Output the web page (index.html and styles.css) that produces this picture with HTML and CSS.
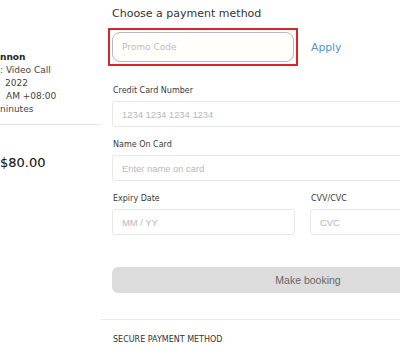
FILE: index.html
```html
<!DOCTYPE html>
<html>
<head>
<meta charset="utf-8">
<link rel="stylesheet" href="styles.css">
</head>
<body>
<div class="page">
  <aside class="summary">
    <div class="details">
      <div class="line strong">nnon</div>
      <div class="line">: Video Call</div>
      <div class="line ind">2022</div>
      <div class="line ind2">AM +08:00</div>
      <div class="line">ninutes</div>
    </div>
    <div class="total">$80.00</div>
  </aside>
  <main class="payment">
    <div class="inner">
      <h2 class="title">Choose a payment method</h2>
      <div class="promo-row">
        <div class="promo-wrap">
          <input class="promo" type="text" placeholder="Promo Code">
        </div>
        <span class="apply">Apply</span>
      </div>
      <div class="field card">
        <label class="label">Credit Card Number</label>
        <input class="input" type="text" placeholder="1234 1234 1234 1234">
      </div>
      <div class="field name">
        <label class="label">Name On Card</label>
        <input class="input" type="text" placeholder="Enter name on card">
      </div>
      <div class="split">
        <div class="field">
          <label class="label">Expiry Date</label>
          <input class="input" type="text" placeholder="MM / YY">
        </div>
        <div class="field">
          <label class="label">CVV/CVC</label>
          <input class="input" type="text" placeholder="CVC">
        </div>
      </div>
      <button class="book">Make booking</button>
    </div>
    <div class="secure">SECURE PAYMENT METHOD</div>
  </main>
</div>
</body>
</html>
```

FILE: styles.css
```css
* { box-sizing: border-box; }
html, body { margin: 0; padding: 0; background: #fff; }
body { width: 400px; height: 364px; overflow: hidden; font-family: "DejaVu Sans", sans-serif; color: #333; }
.page { display: flex; height: 364px; }
.summary { width: 100px; flex: 0 0 100px; overflow: hidden; }
.details { padding-top: 51px; padding-bottom: 8px; border-bottom: 1px solid #e6e6e6; }
.line { font-size: 9px; line-height: 13px; color: #444; white-space: nowrap; }
.line.strong { font-weight: bold; color: #222; }
.line.ind { padding-left: 5px; }
.line.ind2 { padding-left: 6px; }
.total { margin-top: 30px; font-size: 13px; line-height: 16px; color: #111; -webkit-text-stroke: 0.08px #111; }
.payment { flex: 1 1 auto; overflow: hidden; }
.inner { width: 404px; padding-left: 12px; }
.title { margin: 0; padding-top: 6px; font-size: 11px; line-height: 16px; font-weight: normal; color: #333; }
.promo-row { display: flex; align-items: center; margin-top: 10px; }
.promo-wrap { width: 182px; height: 30px; outline: 2px solid #d7262b; outline-offset: 2px; }
.promo { width: 100%; height: 30px; border: 1px solid #b9b9b9; border-radius: 8px; background: #fffefa; padding: 0 0 0 9px; font-family: "DejaVu Sans", sans-serif; font-size: 9px; outline: none; }
.promo::placeholder { color: #bdbdbd; }
.apply { margin-left: 17px; font-size: 10.8px; color: #4d93d3; }
.field { display: flex; flex-direction: column; }
.card { margin-top: 23px; }
.name { margin-top: 12px; }
.split { display: grid; grid-template-columns: 183px 1fr; column-gap: 15px; margin-top: 12px; }
.label { font-size: 8px; line-height: 12px; color: #3a3a3a; margin-bottom: 4px; padding-left: 1px; }
.input { height: 26px; border: 1px solid #e8e8e8; border-radius: 3px; background: #fff; padding: 0 0 0 9px; font-family: "Liberation Sans", Arial, sans-serif; font-size: 9.4px; outline: none; }
.input::placeholder { color: #b8b8b8; }
.book { display: block; width: 392px; height: 26px; margin-top: 32px; border: none; border-radius: 6px; background: #dcdcdc; color: #666; font-family: "Liberation Sans", Arial, sans-serif; font-size: 10.5px; padding: 0; }
.secure { margin-top: 26px; border-top: 1px solid #ececec; padding: 14px 0 0 13px; font-size: 8px; line-height: 12px; color: #333; }
```
